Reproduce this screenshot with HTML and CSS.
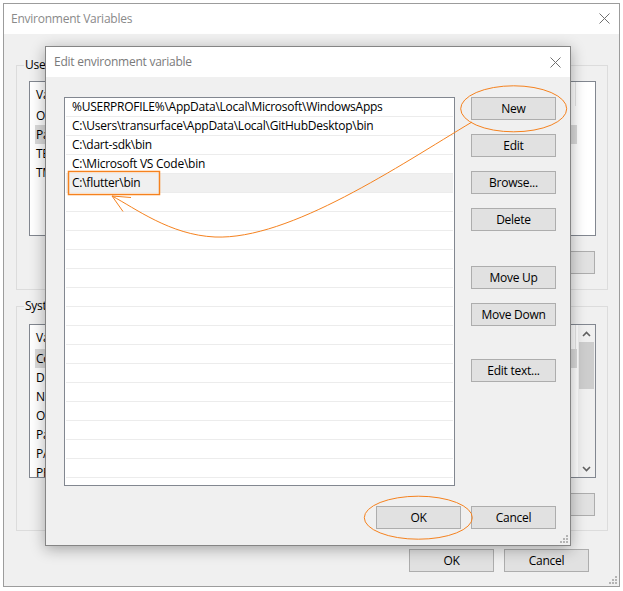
FILE: index.html
```html
<!DOCTYPE html>
<html lang="en">
<head>
<meta charset="utf-8">
<title>Environment Variables</title>
<link rel="stylesheet" href="styles.css">
</head>
<body>
<div class="desktop">
  <div class="window outer">
    <div class="titlebar">
      <span class="title">Environment Variables</span>
      <svg class="close" width="11" height="11" viewBox="0 0 11 11"><path d="M0.5 0.5 L10.5 10.5 M10.5 0.5 L0.5 10.5"/></svg>
    </div>
    <div class="outer-body">
      <section class="group user">
        <span class="group-label">User variables for transurface</span>
        <div class="listview">
          <div class="lv-main">
            <div class="lv-head"><span class="c1">Variable</span><span class="c2">Value</span></div>
            <div class="lv-row"><span class="c1">OneDrive</span><span class="c2">C:\Users\transurface\OneDrive</span></div>
            <div class="lv-row sel"><span class="c1">Path</span><span class="c2">C:\Users\transurface\AppData\Local\Microsoft\WindowsApps;</span></div>
            <div class="lv-row"><span class="c1">TEMP</span><span class="c2">C:\Users\transurface\AppData\Local\Temp</span></div>
            <div class="lv-row"><span class="c1">TMP</span><span class="c2">C:\Users\transurface\AppData\Local\Temp</span></div>
          </div>
        </div>
        <div class="btnrow">
          <button class="btn">New...</button>
          <button class="btn">Edit...</button>
          <button class="btn">Delete</button>
        </div>
      </section>
      <section class="group sys">
        <span class="group-label">System variables</span>
        <div class="listview">
          <div class="lv-main">
            <div class="lv-head"><span class="c1">Variable</span><span class="c2">Value</span></div>
            <div class="lv-row sel"><span class="c1">ComSpec</span><span class="c2">C:\WINDOWS\system32\cmd.exe</span></div>
            <div class="lv-row"><span class="c1">DriverData</span><span class="c2">C:\Windows\System32\Drivers\DriverData</span></div>
            <div class="lv-row"><span class="c1">NUMBER_OF_PROCESSORS</span><span class="c2">4</span></div>
            <div class="lv-row"><span class="c1">OS</span><span class="c2">Windows_NT</span></div>
            <div class="lv-row"><span class="c1">Path</span><span class="c2">C:\WINDOWS\system32;C:\WINDOWS</span></div>
            <div class="lv-row"><span class="c1">PATHEXT</span><span class="c2">.COM;.EXE;.BAT;.CMD;.VBS;.VBE;.JS</span></div>
            <div class="lv-row"><span class="c1">PROCESSOR_ARCHITECTURE</span><span class="c2">AMD64</span></div>
          </div>
          <div class="scrollbar">
            <div class="sb-arrow"><svg width="9" height="6" viewBox="0 0 9 6"><path d="M1 5 L4.5 1.5 L8 5"/></svg></div>
            <div class="sb-track"><div class="sb-thumb"></div></div>
            <div class="sb-arrow"><svg width="9" height="6" viewBox="0 0 9 6"><path d="M1 1 L4.5 4.5 L8 1"/></svg></div>
          </div>
        </div>
        <div class="btnrow">
          <button class="btn">New...</button>
          <button class="btn">Edit...</button>
          <button class="btn">Delete</button>
        </div>
      </section>
      <div class="footer outer-footer">
        <button class="btn">OK</button>
        <button class="btn">Cancel</button>
      </div>
    </div>
    <svg class="grip" width="8" height="8" viewBox="0 0 8 8"><rect x="6" y="0" width="2" height="2"/><rect x="3" y="3" width="2" height="2"/><rect x="6" y="3" width="2" height="2"/><rect x="0" y="6" width="2" height="2"/><rect x="3" y="6" width="2" height="2"/><rect x="6" y="6" width="2" height="2"/></svg>
  </div>

  <div class="window dialog">
    <div class="titlebar">
      <span class="title">Edit environment variable</span>
      <svg class="close" width="11" height="11" viewBox="0 0 11 11"><path d="M0.5 0.5 L10.5 10.5 M10.5 0.5 L0.5 10.5"/></svg>
    </div>
    <div class="dialog-body">
      <div class="pathlist">
        <div class="prow">%USERPROFILE%\AppData\Local\Microsoft\WindowsApps</div>
        <div class="prow">C:\Users\transurface\AppData\Local\GitHubDesktop\bin</div>
        <div class="prow">C:\dart-sdk\bin</div>
        <div class="prow">C:\Microsoft VS Code\bin</div>
        <div class="prow sel">C:\flutter\bin</div>
        <div class="prow"></div><div class="prow"></div><div class="prow"></div><div class="prow"></div>
        <div class="prow"></div><div class="prow"></div><div class="prow"></div><div class="prow"></div>
        <div class="prow"></div><div class="prow"></div><div class="prow"></div><div class="prow"></div>
        <div class="prow"></div><div class="prow"></div><div class="prow"></div><div class="prow"></div>
      </div>
      <div class="sidebtns">
        <button class="btn">New</button>
        <button class="btn">Edit</button>
        <button class="btn">Browse...</button>
        <button class="btn">Delete</button>
        <button class="btn gap1">Move Up</button>
        <button class="btn">Move Down</button>
        <button class="btn gap2">Edit text...</button>
      </div>
      <div class="footer dialog-footer">
        <button class="btn">OK</button>
        <button class="btn">Cancel</button>
      </div>
    </div>
    <svg class="grip" width="8" height="8" viewBox="0 0 8 8"><rect x="6" y="0" width="2" height="2"/><rect x="3" y="3" width="2" height="2"/><rect x="6" y="3" width="2" height="2"/><rect x="0" y="6" width="2" height="2"/><rect x="3" y="6" width="2" height="2"/><rect x="6" y="6" width="2" height="2"/></svg>
  </div>

  <svg class="annot" width="623" height="591" viewBox="0 0 623 591">
    <rect x="68.5" y="171.5" width="91" height="23"/>
    <ellipse cx="513.7" cy="108.8" rx="53" ry="23"/>
    <ellipse cx="418.3" cy="517.7" rx="54" ry="21.5"/>
    <path d="M472 122 C 400 165, 290 240, 215 237 C 170 235, 135 208, 112 196"/>
    <path d="M112 196 L131 197.5 M112 196 L123 211.5"/>
  </svg>
</div>
</body>
</html>
```

FILE: styles.css
```css
* { box-sizing: border-box; }

html, body {
  margin: 0;
  padding: 0;
  background: #ffffff;
}

body {
  font-family: "Open Sans", "Noto Sans", "Liberation Sans", sans-serif;
  font-size: 12px;
  letter-spacing: -0.25px;
  color: #000;
}

.desktop {
  position: relative;
  width: 623px;
  height: 591px;
  overflow: hidden;
  background: #ffffff;
}

.window {
  background: #f0f0f0;
  display: flex;
  flex-direction: column;
}

.outer {
  position: relative;
  margin: 3px 0 0 3px;
  width: 617px;
  height: 584px;
  border: 1px solid #9c9c9c;
}

.titlebar {
  height: 30px;
  flex: none;
  background: #ffffff;
  display: flex;
  align-items: center;
  justify-content: space-between;
  padding: 0 9px 0 7px;
}

.title {
  color: #8a8a8a;
  font-size: 12px;
  line-height: 16px;
}

.close {
  display: block;
  fill: none;
  stroke: #707070;
  stroke-width: 1;
}

.outer .close { margin-top: -2px; }

.outer-body {
  display: flex;
  flex-direction: column;
  padding: 31px 11px 0 12px;
}

.group {
  position: relative;
  border: 1px solid #dcdcdc;
  padding: 15px 11px 15px 12px;
}

.group-label {
  position: absolute;
  top: -9px;
  left: 7px;
  padding: 0 1px;
  line-height: 16px;
  background: #f0f0f0;
  white-space: nowrap;
}

.group.sys {
  margin-top: 16px;
  padding-top: 17px;
  padding-bottom: 14px;
}

.listview {
  display: flex;
  background: #ffffff;
  border: 1px solid #828790;
  overflow: hidden;
}

.user .listview { height: 155px; }
.sys .listview { height: 154px; }

.lv-main {
  flex: 1;
  min-width: 0;
  overflow: hidden;
}

.lv-head {
  display: flex;
  height: 24px;
  align-items: center;
  white-space: nowrap;
}

.lv-head .c1 {
  width: 180px;
  flex: none;
  padding-left: 6px;
}

.lv-head .c2 {
  width: 366px;
  flex: none;
  height: 24px;
  line-height: 24px;
  padding-left: 6px;
  border-right: 1px solid #e5e5e5;
}

.lv-row {
  display: flex;
  height: 19px;
  line-height: 19px;
  margin-left: 5px;
  width: 542px;
  white-space: nowrap;
}

.lv-row .c1 {
  width: 175px;
  flex: none;
  padding-left: 1px;
}

.lv-row .c2 {
  flex: 1;
  padding-left: 6px;
}

.lv-row.sel { background: #dadada; }

.scrollbar {
  width: 17px;
  flex: none;
  background: #f0f0f0;
  display: flex;
  flex-direction: column;
}

.sb-arrow {
  height: 17px;
  display: flex;
  align-items: center;
  justify-content: center;
}

.sb-arrow svg {
  display: block;
  fill: none;
  stroke: #606060;
  stroke-width: 1.6;
}

.sb-track {
  flex: 1;
}

.sb-thumb {
  height: 47px;
  margin: 0 1px 0 1px;
  background: #cdcdcd;
}

.btnrow {
  display: flex;
  justify-content: flex-end;
  gap: 10px;
  margin-top: 15px;
  padding-right: 1px;
}

.btn {
  font-family: inherit;
  font-size: 12px;
  letter-spacing: -0.25px;
  color: #000;
  background: #e1e1e1;
  border: 1px solid #adadad;
  border-radius: 0;
  height: 23px;
  width: 85px;
  padding: 0;
  margin: 0;
  line-height: 21px;
}

.footer {
  display: flex;
  justify-content: flex-end;
  gap: 10px;
}

.outer-footer {
  margin-top: 18px;
  padding-right: 19px;
}

.grip {
  position: absolute;
  right: 2px;
  bottom: 2px;
  fill: #b4b4b4;
}

/* Dialog */
.dialog {
  position: absolute;
  left: 45px;
  top: 46px;
  width: 526px;
  height: 500px;
  border: 1px solid #858585;
  box-shadow: 0 3px 14px rgba(0, 0, 0, 0.32);
}

.dialog .title { color: #7a7a7a; }

.dialog .titlebar { padding: 0 9px 0 8px; }

.dialog-body {
  display: grid;
  grid-template-columns: 391px 85px;
  column-gap: 16px;
  padding: 20px 14px 16px 18px;
}

.pathlist {
  height: 389px;
  background: #ffffff;
  border: 1px solid #828790;
  padding: 0 1px;
  overflow: hidden;
}

.prow {
  height: 19px;
  line-height: 18px;
  border-bottom: 1px solid #ececec;
  padding-left: 6px;
  white-space: nowrap;
  overflow: hidden;
}

.prow.sel { background: #f0f0f0; }

.sidebtns {
  display: flex;
  flex-direction: column;
  gap: 14px;
}

.sidebtns .gap1 { margin-top: 21px; }
.sidebtns .gap2 { margin-top: 19px; }

.dialog-footer {
  grid-column: 1 / span 2;
  margin-top: 20px;
}

.annot {
  position: absolute;
  left: 0;
  top: 0;
  pointer-events: none;
  fill: none;
  stroke: #f5821f;
  stroke-width: 1;
}

.annot rect { stroke-width: 1.5; }
```
